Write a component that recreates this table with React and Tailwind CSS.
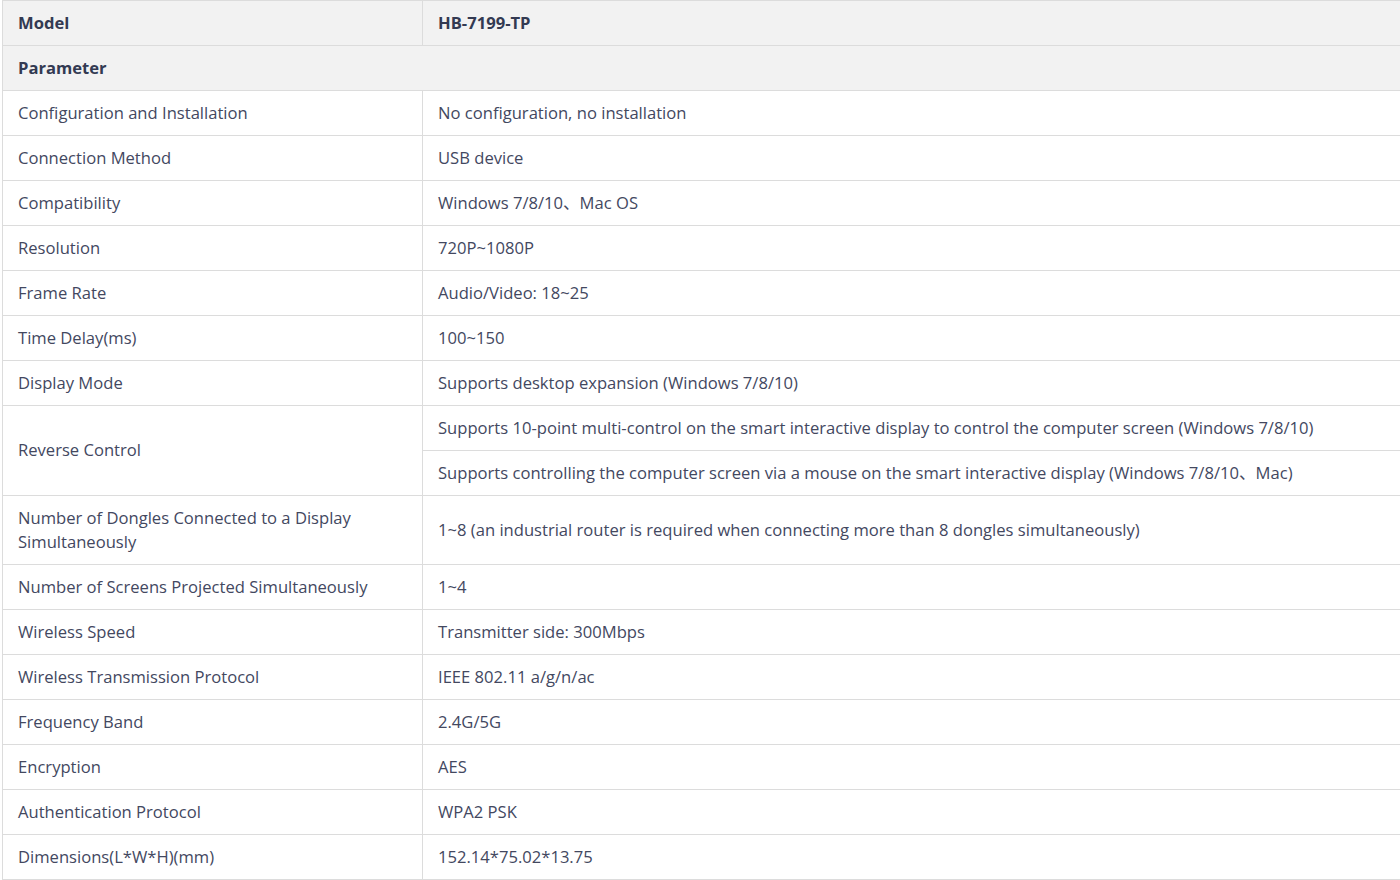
const rows = [
  ['Configuration and Installation', 'No configuration, no installation'],
  ['Connection Method', 'USB device'],
  ['Compatibility', 'Windows 7/8/10、Mac OS'],
  ['Resolution', '720P~1080P'],
  ['Frame Rate', 'Audio/Video: 18~25'],
  ['Time Delay(ms)', '100~150'],
  ['Display Mode', 'Supports desktop expansion (Windows 7/8/10)'],
];

const rowsAfter = [
  ['Number of Screens Projected Simultaneously', '1~4'],
  ['Wireless Speed', 'Transmitter side: 300Mbps'],
  ['Wireless Transmission Protocol', 'IEEE 802.11 a/g/n/ac'],
  ['Frequency Band', '2.4G/5G'],
  ['Encryption', 'AES'],
  ['Authentication Protocol', 'WPA2 PSK'],
  ['Dimensions(L*W*H)(mm)', '152.14*75.02*13.75'],
];

const td = 'border border-[#dcdcdc] pl-[15px] pr-4 h-[45px] align-middle';

export default function App() {
  return (
    <div className="w-[1400px] h-[880px] overflow-hidden bg-white pl-[2px] font-['Open_Sans','Noto_Sans_CJK_SC',sans-serif] text-[16.6px] text-[#43485f]">
      <table className="w-[1420px] border-collapse table-fixed">
        <colgroup>
          <col className="w-[420px]" />
          <col />
        </colgroup>
        <tbody>
          <tr className="bg-[#f2f2f2] font-bold text-[#333a52]">
            <td className={td}>Model</td>
            <td className={td}>HB-7199-TP</td>
          </tr>
          <tr className="bg-[#f2f2f2] font-bold text-[#333a52]">
            <td className={td} colSpan={2}>Parameter</td>
          </tr>
          {rows.map(([k, v]) => (
            <tr key={k}>
              <td className={td}>{k}</td>
              <td className={td}>{v}</td>
            </tr>
          ))}
          <tr>
            <td className={td} rowSpan={2}>Reverse Control</td>
            <td className={td}>Supports 10-point multi-control on the smart interactive display to control the computer screen (Windows 7/8/10)</td>
          </tr>
          <tr>
            <td className={td}>Supports controlling the computer screen via a mouse on the smart interactive display (Windows 7/8/10、Mac)</td>
          </tr>
          <tr>
            <td className={td + ' py-[10px] leading-6'}>Number of Dongles Connected to a Display Simultaneously</td>
            <td className={td}>1~8 (an industrial router is required when connecting more than 8 dongles simultaneously)</td>
          </tr>
          {rowsAfter.map(([k, v]) => (
            <tr key={k}>
              <td className={td}>{k}</td>
              <td className={td}>{v}</td>
            </tr>
          ))}
        </tbody>
      </table>
    </div>
  );
}
